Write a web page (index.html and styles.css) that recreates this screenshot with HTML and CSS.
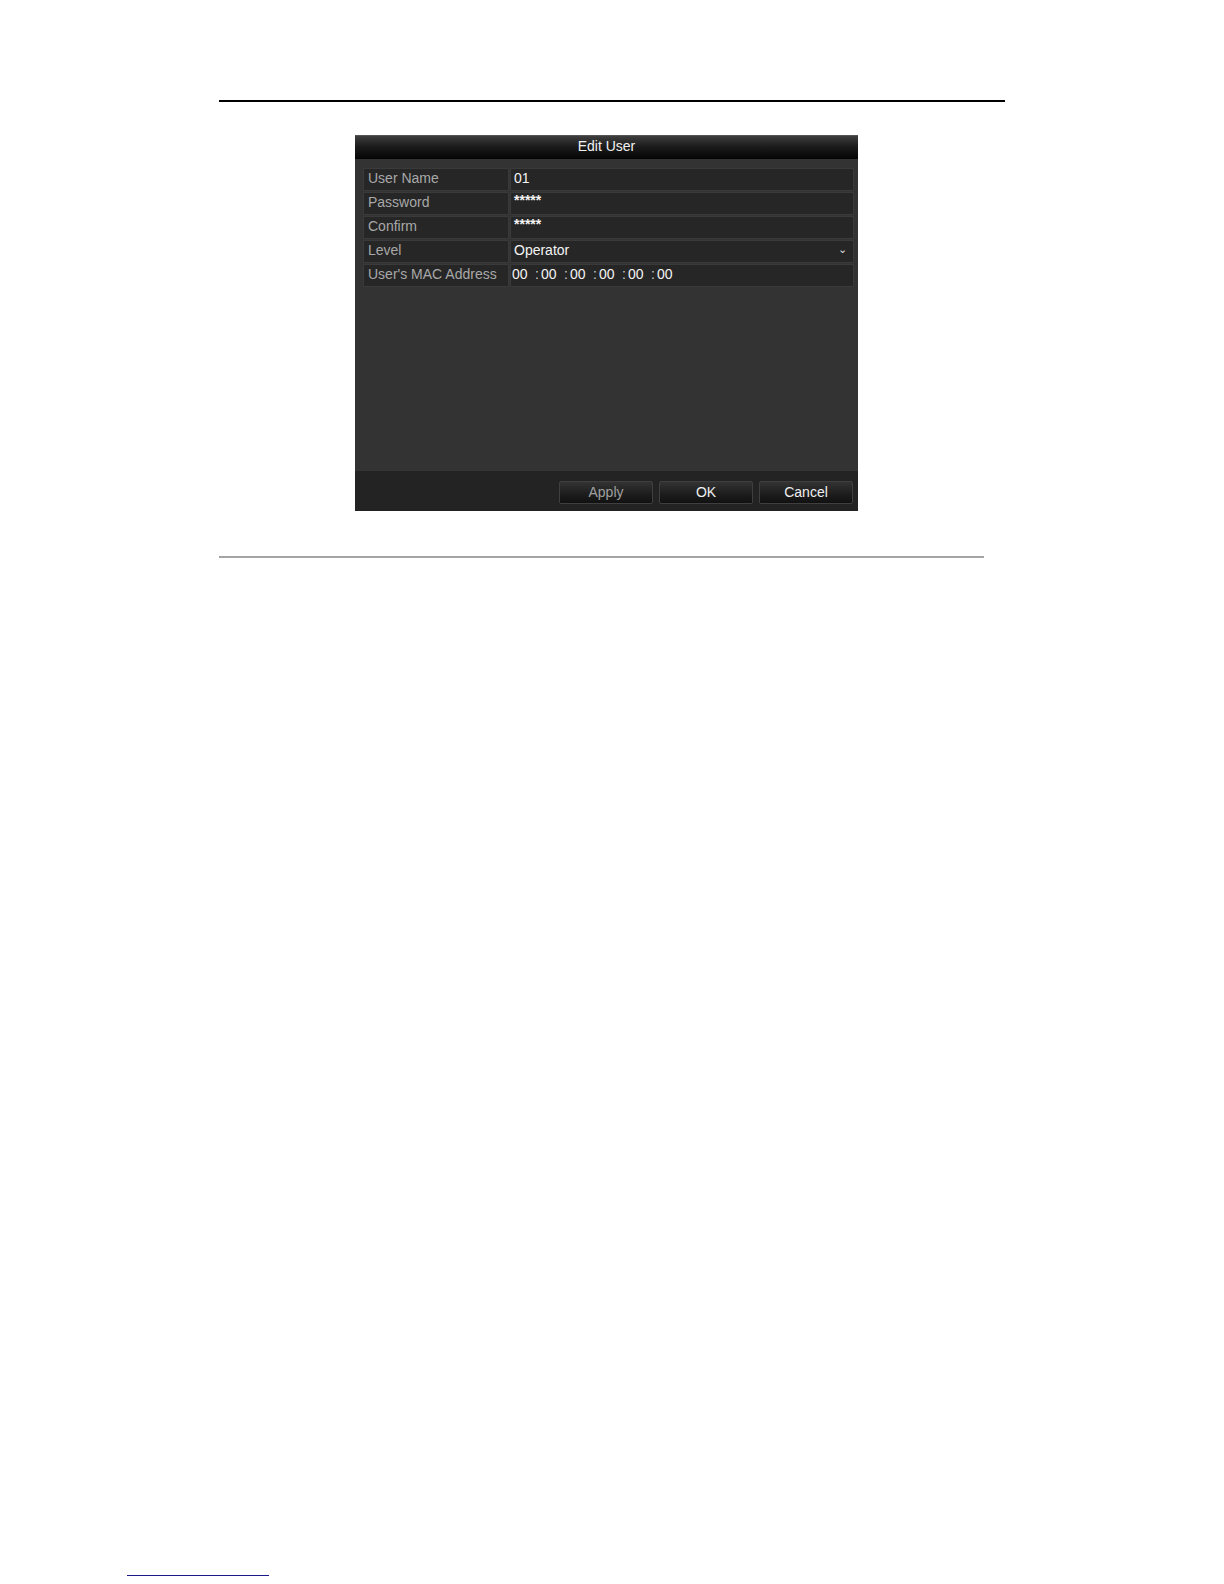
FILE: index.html
```html
<!DOCTYPE html>
<html>
<head>
<meta charset="utf-8">
<link rel="stylesheet" href="styles.css">
</head>
<body>
<div class="page">
  <div class="top-rule"></div>
  <div class="figure">
    <div class="dialog">
      <div class="dlg-title">Edit User</div>
      <div class="dlg-body">
        <div class="row">
          <div class="label">User Name</div>
          <div class="value">01</div>
        </div>
        <div class="row">
          <div class="label">Password</div>
          <div class="value stars">*****</div>
        </div>
        <div class="row">
          <div class="label">Confirm</div>
          <div class="value stars">*****</div>
        </div>
        <div class="row">
          <div class="label">Level</div>
          <div class="value select"><span>Operator</span><span class="caret">&#8964;</span></div>
        </div>
        <div class="row">
          <div class="label">User's MAC Address</div>
          <div class="value mac"><span class="oct">00</span><span class="sep">:</span><span class="oct">00</span><span class="sep">:</span><span class="oct">00</span><span class="sep">:</span><span class="oct">00</span><span class="sep">:</span><span class="oct">00</span><span class="sep">:</span><span class="oct">00</span></div>
        </div>
      </div>
      <div class="dlg-footer">
        <div class="btn dim">Apply</div>
        <div class="btn">OK</div>
        <div class="btn">Cancel</div>
      </div>
    </div>
  </div>
  <div class="bottom-rule"></div>
  <div class="spacer"></div>
  <div class="link-line"></div>
</div>
</body>
</html>
```
FILE: styles.css
```css
html, body {
  margin: 0;
  padding: 0;
  background: #ffffff;
}
body {
  font-family: "Liberation Sans", Arial, sans-serif;
}
.page {
  width: 1224px;
  height: 1584px;
  display: flex;
  flex-direction: column;
}
.top-rule {
  margin-top: 100px;
  margin-left: 219px;
  width: 786px;
  height: 2px;
  background: #000;
}
.figure {
  margin-top: 33px;
  margin-left: 355px;
}
.dialog {
  width: 503px;
  height: 376px;
  background: #333333;
  display: flex;
  flex-direction: column;
}
.dlg-title {
  height: 23px;
  line-height: 21px;
  text-align: center;
  color: #f2f2f2;
  font-size: 14px;
  background: linear-gradient(#3e3e3e 0%, #1c1c1c 45%, #050505 100%);
  border-top: 1px solid #555;
}
.dlg-body {
  flex: 1;
  padding: 9px 4px 0 8px;
  display: flex;
  flex-direction: column;
  gap: 1px;
}
.row {
  display: flex;
  height: 23px;
  gap: 1px;
}
.label, .value {
  background: #262626;
  border: 1px solid #3a3a3a;
  border-radius: 1px;
  box-sizing: border-box;
  height: 23px;
  line-height: 19px;
  font-size: 14px;
  padding-left: 4px;
}
.label {
  width: 146px;
  color: #a8a8a8;
}
.value {
  flex: 1;
  color: #f4f4f4;
  padding-left: 3px;
}
.stars {
  font-size: 14px;
  font-weight: bold;
  line-height: 15px;
}
.select {
  display: flex;
  justify-content: space-between;
  padding-right: 6px;
}
.caret {
  font-size: 11px;
  color: #ddd;
  line-height: 16px;
}
.mac {
  padding-left: 1px;
}
.oct {
  display: inline-block;
  width: 23px;
}
.sep {
  display: inline-block;
  width: 6px;
  text-align: left;
  color: #cfcfcf;
}
.dlg-footer {
  height: 40px;
  background: #232323;
  display: flex;
  justify-content: flex-end;
  align-items: flex-start;
  gap: 6px;
  padding: 10px 5px 0 0;
  box-sizing: border-box;
}
.btn {
  width: 94px;
  height: 23px;
  box-sizing: border-box;
  border: 1px solid #3f3f3f;
  border-radius: 2px;
  background: linear-gradient(#333333, #1c1c1c 60%, #111111);
  color: #f0f0f0;
  font-size: 14px;
  text-align: center;
  line-height: 21px;
}
.btn.dim {
  color: #a0a0a0;
}
.bottom-rule {
  margin-top: 45px;
  margin-left: 219px;
  width: 765px;
  height: 2px;
  background: #a4a4a4;
}
.spacer {
  flex: 1;
}
.link-line {
  margin-left: 127px;
  width: 142px;
  height: 1px;
  background: #1a1a8a;
  margin-bottom: 8px;
}
```
